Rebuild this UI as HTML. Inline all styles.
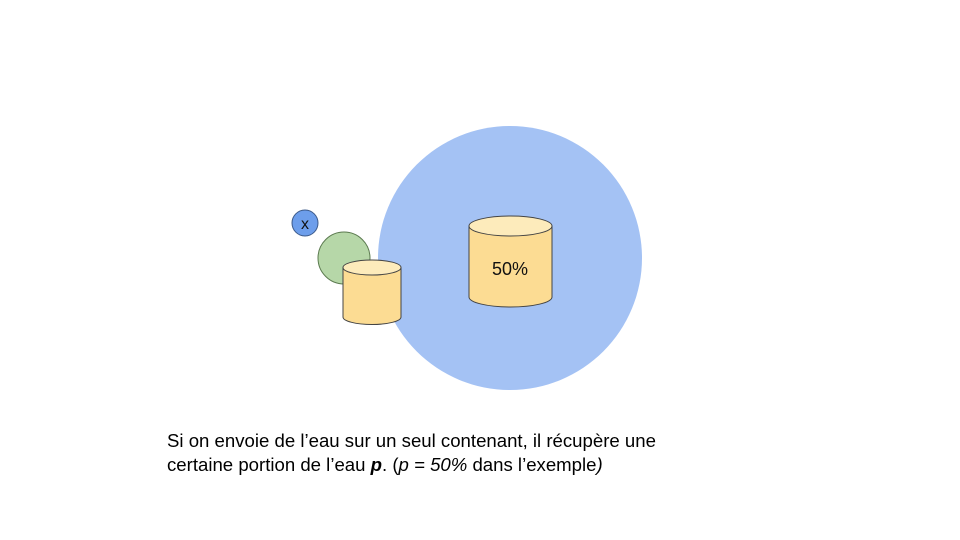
<!DOCTYPE html>
<html><head><style>
html,body{margin:0;padding:0;background:#fff;width:960px;height:540px;overflow:hidden}
svg{display:block}
</style></head><body>
<svg width="960" height="540" viewBox="0 0 960 540" xmlns="http://www.w3.org/2000/svg">
<defs>
<linearGradient id="cy" x1="0" y1="0" x2="0" y2="1"><stop offset="0" stop-color="#fde7aa"/><stop offset="1" stop-color="#fcda8c"/></linearGradient>
</defs>
<circle cx="510" cy="258" r="132" fill="#a4c2f4"/>
<circle cx="305" cy="223" r="13" fill="#6d9eeb" stroke="#3c5a8a" stroke-width="1"/>
<text x="305" y="229" font-family="Liberation Sans, sans-serif" font-size="16" text-anchor="middle" fill="#111">x</text>
<circle cx="344" cy="258" r="26" fill="#b6d7a8" stroke="#5b7a4f" stroke-width="1"/>
<path d="M343,267.5 L343,317 A29,7.5 0 0 0 401,317 L401,267.5" fill="#fcdc93" stroke="#444" stroke-width="1"/>
<ellipse cx="372" cy="267.5" rx="29" ry="7.5" fill="#fdebbb" stroke="#444" stroke-width="1"/>
<path d="M469,226 L469,297 A41.5,10 0 0 0 552,297 L552,226" fill="#fcdc93" stroke="#444" stroke-width="1"/>
<ellipse cx="510.5" cy="226" rx="41.5" ry="10" fill="#fdebbb" stroke="#444" stroke-width="1"/>
<text x="510" y="275" font-family="Liberation Sans, sans-serif" font-size="18" text-anchor="middle" fill="#111">50%</text>
<text x="167" y="447" font-family="Liberation Sans, sans-serif" font-size="18.6" fill="#000">Si on envoie de l’eau sur un seul contenant, il récupère une</text>
<text x="167" y="471" font-family="Liberation Sans, sans-serif" font-size="18.6" fill="#000">certaine portion de l’eau <tspan font-weight="bold" font-style="italic">p</tspan>. (<tspan font-style="italic">p = 50%</tspan> dans l’exemple<tspan font-style="italic">)</tspan></text>
</svg>
</body></html>
